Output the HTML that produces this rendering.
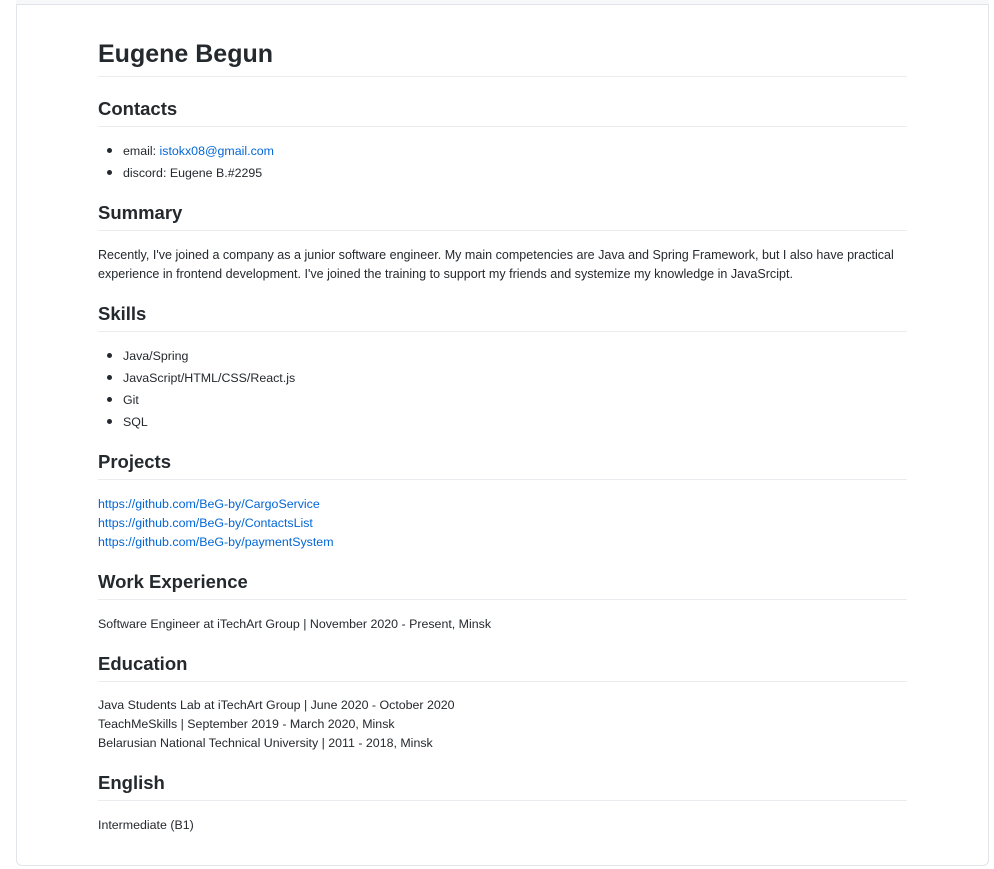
<!DOCTYPE html>
<html><head><meta charset="utf-8"><style>
html,body{margin:0;padding:0;background:#fff;}
body{width:994px;height:869px;position:relative;overflow:hidden;font-family:"Liberation Sans",sans-serif;color:#24292e;}
.card{position:absolute;left:16px;top:4px;width:971px;height:860px;border:1px solid #e1e4e8;border-radius:0 0 6px 6px;}
.topbar{position:absolute;left:16px;top:0;width:973px;height:4px;background:#f6f8fa;}
.t{position:absolute;left:98px;white-space:nowrap;font-size:12.4px;line-height:18px;}
.h{position:absolute;left:98px;width:809px;font-weight:600;white-space:nowrap;}
.h2{font-size:18.5px;line-height:24px;}
.line{position:absolute;left:98px;width:809px;height:1px;background:#eaecef;}
.li{position:absolute;left:123px;white-space:nowrap;font-size:12.4px;line-height:18px;}
.dot{position:absolute;left:107px;width:5px;height:5px;border-radius:50%;background:#24292e;}
a{color:#0366d6;text-decoration:none;}
</style></head><body>
<div class="topbar"></div>
<div class="card"></div>

<div class="h" style="top:38px;font-size:25px;line-height:32px;">Eugene Begun</div>
<div class="line" style="top:76px"></div>

<div class="h h2" style="top:97px">Contacts</div>
<div class="line" style="top:126px"></div>
<div class="dot" style="top:148px"></div><div class="li" style="top:142px">email: <a>istokx08@gmail.com</a></div>
<div class="dot" style="top:170px"></div><div class="li" style="top:164px">discord: Eugene B.#2295</div>

<div class="h h2" style="top:201px">Summary</div>
<div class="line" style="top:230px"></div>
<div class="t" style="top:246px;font-size:12.55px">Recently, I've joined a company as a junior software engineer. My main competencies are Java and Spring Framework, but I also have practical</div>
<div class="t" style="top:265px;font-size:12.55px">experience in frontend development. I've joined the training to support my friends and systemize my knowledge in JavaSrcipt.</div>

<div class="h h2" style="top:302px">Skills</div>
<div class="line" style="top:331px"></div>
<div class="dot" style="top:353px"></div><div class="li" style="top:347px">Java/Spring</div>
<div class="dot" style="top:375px"></div><div class="li" style="top:369px">JavaScript/HTML/CSS/React.js</div>
<div class="dot" style="top:397px"></div><div class="li" style="top:391px">Git</div>
<div class="dot" style="top:419px"></div><div class="li" style="top:413px">SQL</div>

<div class="h h2" style="top:450px">Projects</div>
<div class="line" style="top:479px"></div>
<div class="t" style="top:495px"><a>https://github.com/BeG-by/CargoService</a></div>
<div class="t" style="top:514px"><a>https://github.com/BeG-by/ContactsList</a></div>
<div class="t" style="top:533px"><a>https://github.com/BeG-by/paymentSystem</a></div>

<div class="h h2" style="top:570px">Work Experience</div>
<div class="line" style="top:599px"></div>
<div class="t" style="top:615px">Software Engineer at iTechArt Group | November 2020 - Present, Minsk</div>

<div class="h h2" style="top:652px">Education</div>
<div class="line" style="top:681px"></div>
<div class="t" style="top:696px">Java Students Lab at iTechArt Group | June 2020 - October 2020</div>
<div class="t" style="top:715px">TeachMeSkills | September 2019 - March 2020, Minsk</div>
<div class="t" style="top:734px">Belarusian National Technical University | 2011 - 2018, Minsk</div>

<div class="h h2" style="top:771px">English</div>
<div class="line" style="top:800px"></div>
<div class="t" style="top:816px">Intermediate (B1)</div>
</body></html>
